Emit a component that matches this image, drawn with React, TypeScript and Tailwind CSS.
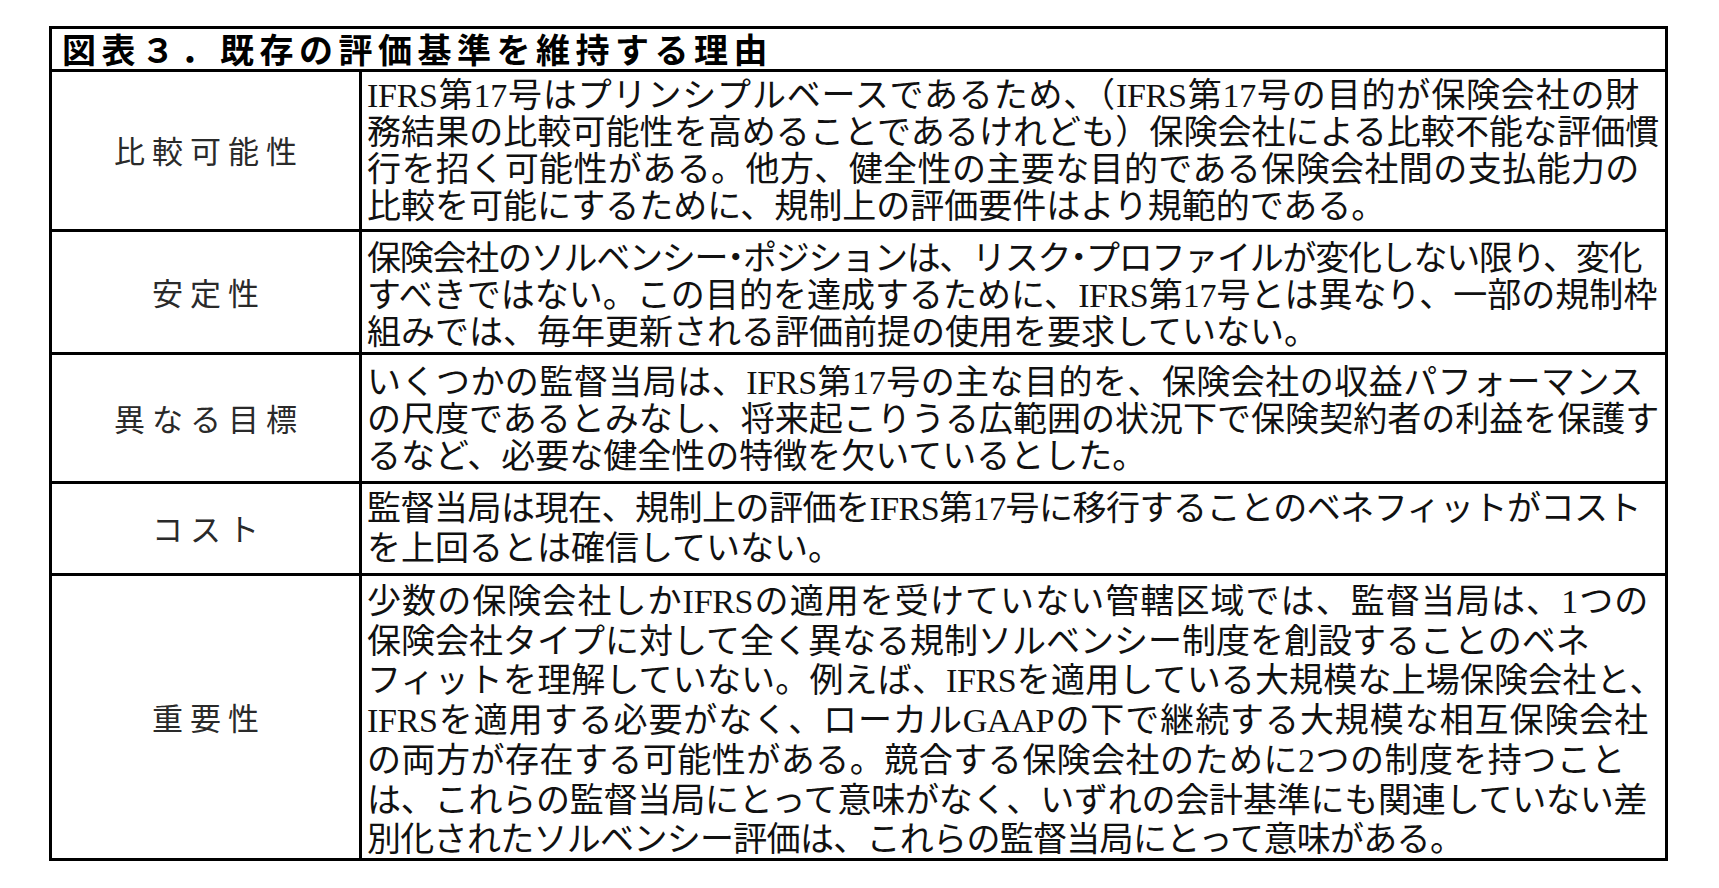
import React from 'react';

type Line = {
  text: React.ReactNode;
  cls?: string;
};

type Row = {
  label: string;
  rowClass: string;
  textClass: string;
  lines: Line[];
};

// full lines are stretched to the width the scan shows
const J = 'text-justify [text-align-last:justify]';

// the scan sets the middle dot narrower than a full em
const Dot = () => <span className="[font-feature-settings:'palt']">・</span>;

const rows: Row[] = [
  {
    label: '比較可能性',
    rowClass: 'h-[160px]',
    textClass: 'pt-[5px] leading-[37px]',
    lines: [
      { text: 'IFRS第17号はプリンシプルベースであるため、（IFRS第17号の目的が保険会社の財', cls: `w-[1272px] tracking-[-0.3px] ${J}` },
      { text: '務結果の比較可能性を高めることであるけれども）保険会社による比較不能な評価慣', cls: `w-[1292px] tracking-[-0.3px] ${J}` },
      { text: '行を招く可能性がある。他方、健全性の主要な目的である保険会社間の支払能力の', cls: `w-[1272px] tracking-[-0.3px] ${J}` },
      { text: '比較を可能にするために、規制上の評価要件はより規範的である。' },
    ],
  },
  {
    label: '安定性',
    rowClass: 'h-[123px]',
    textClass: 'pt-[8px] leading-[37px]',
    lines: [
      {
        text: (
          <>
            保険会社のソルベンシー<Dot />ポジションは、リスク<Dot />プロファイルが変化しない限り、変化
          </>
        ),
        cls: `w-[1274px] tracking-[-1.6px] ${J}`,
      },
      { text: 'すべきではない。この目的を達成するために、IFRS第17号とは異なり、一部の規制枠', cls: `w-[1290px] tracking-[-0.4px] ${J}` },
      { text: '組みでは、毎年更新される評価前提の使用を要求していない。' },
    ],
  },
  {
    label: '異なる目標',
    rowClass: 'h-[129px]',
    textClass: 'pt-[9px] leading-[37px]',
    lines: [
      { text: 'いくつかの監督当局は、IFRS第17号の主な目的を、保険会社の収益パフォーマンス', cls: `w-[1276px] tracking-[-0.3px] ${J}` },
      { text: 'の尺度であるとみなし、将来起こりうる広範囲の状況下で保険契約者の利益を保護す', cls: `w-[1292px] tracking-[-0.3px] ${J}` },
      { text: 'るなど、必要な健全性の特徴を欠いているとした。' },
    ],
  },
  {
    label: 'コスト',
    rowClass: 'h-[92px]',
    textClass: 'pt-[5px] leading-[40px]',
    lines: [
      { text: '監督当局は現在、規制上の評価をIFRS第17号に移行することのベネフィットがコスト', cls: `w-[1274px] tracking-[-0.6px] ${J}` },
      { text: 'を上回るとは確信していない。' },
    ],
  },
  {
    label: '重要性',
    rowClass: 'h-[285px]',
    textClass: 'pt-[6px] leading-[39.7px]',
    lines: [
      { text: '少数の保険会社しかIFRSの適用を受けていない管轄区域では、監督当局は、1つの', cls: `w-[1281px] tracking-[-0.3px] ${J}` },
      { text: '保険会社タイプに対して全く異なる規制ソルベンシー制度を創設することのベネ' },
      { text: 'フィットを理解していない。例えば、IFRSを適用している大規模な上場保険会社と、', cls: `w-[1296px] tracking-[-0.4px] ${J}` },
      { text: 'IFRSを適用する必要がなく、ローカルGAAPの下で継続する大規模な相互保険会社', cls: `w-[1281px] tracking-[-0.3px] ${J}` },
      { text: 'の両方が存在する可能性がある。競合する保険会社のために2つの制度を持つこと', cls: `w-[1258px] tracking-[-0.3px] ${J}` },
      { text: 'は、これらの監督当局にとって意味がなく、いずれの会計基準にも関連していない差', cls: `w-[1280px] tracking-[-0.6px] ${J}` },
      { text: '別化されたソルベンシー評価は、これらの監督当局にとって意味がある。', cls: 'tracking-[-0.7px]' },
    ],
  },
];

const App: React.FC = () => {
  return (
    <div className="w-[1719px] h-[888px] bg-white pt-[26px] pl-[49px]">
      <div className="w-[1619px] border-[3px] border-black flex flex-col">
        {/* title */}
        <div className="h-[40px] flex items-center pl-[10px]">
          <h2 className="text-[34px] font-bold tracking-[5.5px] text-black leading-none font-['Noto_Sans_CJK_JP',sans-serif]">
            図表３．既存の評価基準を維持する理由
          </h2>
        </div>

        {rows.map((row, i) => (
          <div key={i} className={`flex border-t-[3px] border-black ${row.rowClass}`}>
            <div className="w-[310px] shrink-0 flex items-center justify-center border-r-[3px] border-black">
              <span className="text-[31px] tracking-[7px] pl-[7px] text-[#2a2a2a] font-['Noto_Sans_CJK_JP',sans-serif]">
                {row.label}
              </span>
            </div>
            <div
              className={`flex-1 min-w-0 pl-[5px] text-[34px] text-[#111] font-['Liberation_Serif','Noto_Sans_CJK_JP',serif] ${row.textClass}`}
            >
              {row.lines.map((line, j) => (
                <div key={j} className={line.cls ?? ''}>
                  {line.text}
                </div>
              ))}
            </div>
          </div>
        ))}
      </div>
    </div>
  );
};

export default App;
